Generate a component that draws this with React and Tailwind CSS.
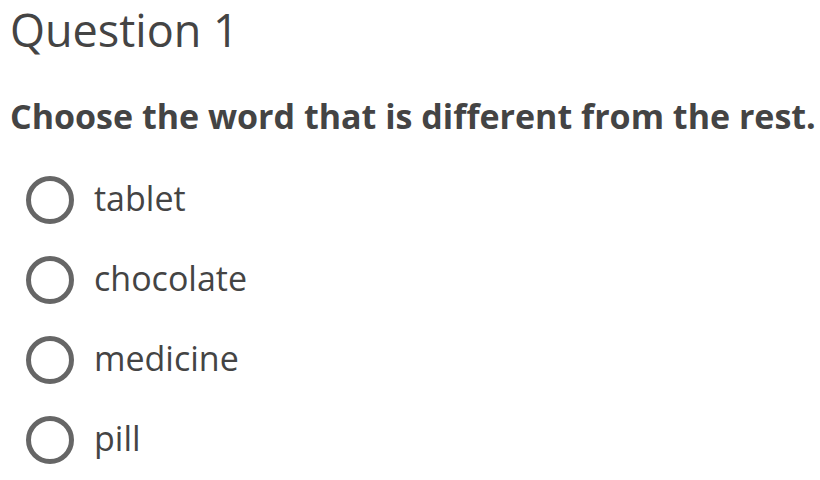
import React from "react";

const OPTIONS = ["tablet", "chocolate", "medicine", "pill"];

export default function App() {
  return (
    <div className="h-[480px] w-[820px] bg-white pl-[10px] pt-[2px] text-[#444] font-['Open_Sans',sans-serif]">
      <h1 className="text-[45px] leading-[56px] text-[#444]">Question 1</h1>
      <p className="mt-[36px] text-[34px] font-bold leading-[44px] text-[#444]">
        Choose the word that is different from the rest.
      </p>
      <div className="mt-[38px] flex flex-col gap-[32px]">
        {OPTIONS.map((opt) => (
          <label key={opt} className="flex h-[48px] items-center">
            <span className="ml-[16px] size-[48px] shrink-0 rounded-full border-[5px] border-[#666]" />
            <span className="mb-[5px] ml-[20px] text-[34px] leading-[44px] text-[#444]">{opt}</span>
          </label>
        ))}
      </div>
    </div>
  );
}
